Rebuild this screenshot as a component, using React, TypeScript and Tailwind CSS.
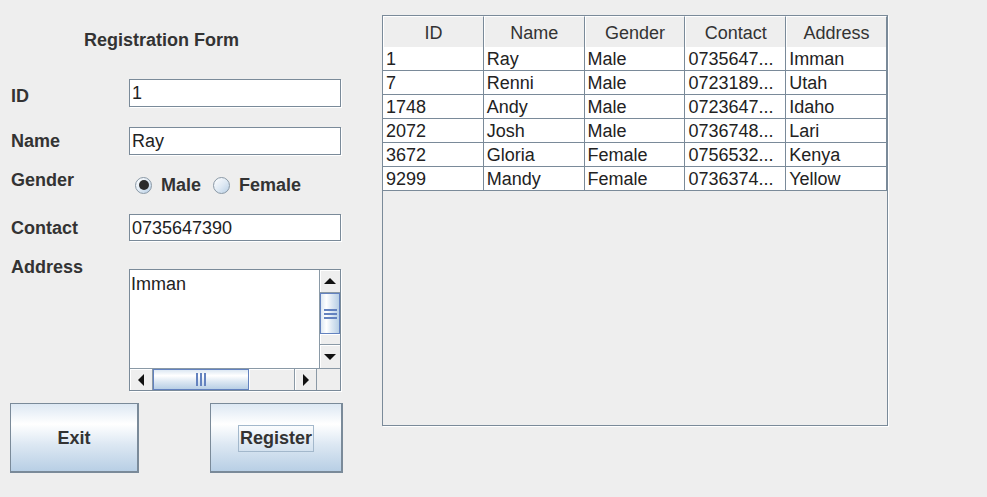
import React from "react";

const columns = ["ID", "Name", "Gender", "Contact", "Address"];

const rows = [
  ["1", "Ray", "Male", "0735647...", "Imman"],
  ["7", "Renni", "Male", "0723189...", "Utah"],
  ["1748", "Andy", "Male", "0723647...", "Idaho"],
  ["2072", "Josh", "Male", "0736748...", "Lari"],
  ["3672", "Gloria", "Female", "0756532...", "Kenya"],
  ["9299", "Mandy", "Female", "0736374...", "Yellow"],
];

function Arrow({ dir }: { dir: "up" | "down" | "left" | "right" }) {
  const points = {
    up: "0,6 12,6 6,0",
    down: "0,0 12,0 6,6",
    left: "6,0 6,12 0,6",
    right: "0,0 0,12 6,6",
  }[dir];
  const vertical = dir === "up" || dir === "down";
  return (
    <svg width={vertical ? 12 : 6} height={vertical ? 6 : 12} viewBox={vertical ? "0 0 12 6" : "0 0 6 12"}>
      <polygon points={points} fill="#111" />
    </svg>
  );
}

function ScrollButton({ dir, className }: { dir: "up" | "down" | "left" | "right"; className: string }) {
  return (
    <div
      className={`flex items-center justify-center bg-[#eeeeee] shadow-[inset_1px_1px_0_#ffffff] border-[#8a99a6] ${className}`}
    >
      <Arrow dir={dir} />
    </div>
  );
}

function TextField({ value, height }: { value: string; height: "h-[28px]" | "h-[27px]" }) {
  return (
    <div
      className={`w-[212px] ${height} bg-white border border-[#7a8a99] shadow-[1px_1px_0_#ffffff] pl-[2px] text-[18px] leading-[26px] text-[#222]`}
    >
      {value}
    </div>
  );
}

function Radio({ checked, label }: { checked: boolean; label: string }) {
  return (
    <div className="flex items-center h-[24px]">
      <span className="w-[17px] h-[17px] rounded-full border border-[#8a99a6] bg-[linear-gradient(135deg,#ffffff_0%,#dde8f3_55%,#b8cfe5_100%)] flex items-center justify-center">
        {checked && <span className="w-[10px] h-[10px] rounded-full bg-[#2b2b2b]" />}
      </span>
      <span className="ml-[9px] font-bold text-[18px] leading-[24px] text-[#333]">{label}</span>
    </div>
  );
}

function AddressArea() {
  return (
    <div className="w-[212px] h-[122px] bg-white border border-[#7a8a99] shadow-[1px_1px_0_#ffffff] flex flex-col">
      <div className="flex h-[98px]">
        <div className="flex-1 pl-[1px] pt-[3px] text-[18px] leading-[22px] text-[#222]">Imman</div>
        <div className="w-[21px] flex flex-col border-l border-[#8a99a6] bg-[#eeeeee]">
          <ScrollButton dir="up" className="h-[23px] border-b" />
          <div className="h-[41px] border border-[#6382bf] bg-[linear-gradient(to_right,#dde8f3_0%,#ffffff_30%,#dde8f3_60%,#b8cfe5_100%)] flex flex-col items-center justify-center gap-[2px]">
            <span className="w-[13px] h-[2px] bg-[#6382bf]" />
            <span className="w-[13px] h-[2px] bg-[#6382bf]" />
            <span className="w-[13px] h-[2px] bg-[#6382bf]" />
          </div>
          <div className="h-[11px] border-b border-[#8a99a6] shadow-[inset_1px_1px_0_#ffffff]" />
          <ScrollButton dir="down" className="flex-1" />
        </div>
      </div>
      <div className="flex h-[22px] border-t border-[#8a99a6] bg-[#eeeeee]">
        <ScrollButton dir="left" className="w-[23px] border-r" />
        <div className="w-[96px] border border-[#6382bf] bg-[linear-gradient(to_bottom,#dde8f3_0%,#ffffff_30%,#dde8f3_60%,#b8cfe5_100%)] flex items-center justify-center gap-[2px]">
          <span className="w-[2px] h-[13px] bg-[#6382bf]" />
          <span className="w-[2px] h-[13px] bg-[#6382bf]" />
          <span className="w-[2px] h-[13px] bg-[#6382bf]" />
        </div>
        <div className="w-[46px] border-r border-[#8a99a6] shadow-[inset_1px_1px_0_#ffffff]" />
        <ScrollButton dir="right" className="w-[22px] border-r" />
        <div className="flex-1 bg-[#eeeeee]" />
      </div>
    </div>
  );
}

export default function App() {
  return (
    <div className="w-[987px] h-[497px] bg-[#eeeeee] flex font-['Liberation_Sans',Arial,sans-serif] text-[#222] overflow-hidden">
      {/* form */}
      <div className="w-[382px] flex flex-col pt-[28px]">
        <div className="pl-[84px] font-bold text-[18px] leading-[24px] text-[#333]">Registration Form</div>

        <div className="flex mt-[27px] h-[28px]">
          <div className="w-[129px] pl-[11px] pt-[3px] font-bold text-[18px] leading-[28px] text-[#333]">ID</div>
          <TextField value="1" height="h-[28px]" />
        </div>

        <div className="flex mt-[20px] h-[28px]">
          <div className="w-[129px] pl-[11px] font-bold text-[18px] leading-[28px] text-[#333]">Name</div>
          <TextField value="Ray" height="h-[28px]" />
        </div>

        <div className="flex items-start h-[24px] mt-[13px]">
          <div className="w-[129px] pl-[11px] font-bold text-[18px] leading-[24px] text-[#333]">Gender</div>
          <div className="flex items-start h-[24px] gap-[12px] pl-[6px] mt-[5px]">
            <Radio checked label="Male" />
            <Radio checked={false} label="Female" />
          </div>
        </div>

        <div className="flex mt-[22px] h-[27px]">
          <div className="w-[129px] pl-[11px] pt-[1px] font-bold text-[18px] leading-[27px] text-[#333]">Contact</div>
          <TextField value="0735647390" height="h-[27px]" />
        </div>

        <div className="flex mt-[15px]">
          <div className="w-[129px] pl-[11px] font-bold text-[18px] leading-[22px] text-[#333]">Address</div>
          <div className="mt-[13px]">
            <AddressArea />
          </div>
        </div>

        <div className="flex mt-[12px] pl-[10px] gap-[71px]">
          <button className="w-[129px] h-[70px] border border-[#7a8a99] border-r-2 border-b-2 pt-[2px] bg-[linear-gradient(to_bottom,#dde8f3_0%,#ffffff_30%,#dde8f3_60%,#b8cfe5_100%)] font-bold text-[18px] text-[#333]">
            Exit
          </button>
          <button className="w-[133px] h-[70px] border border-[#7a8a99] border-r-2 border-b-2 pt-[2px] bg-[linear-gradient(to_bottom,#dde8f3_0%,#ffffff_30%,#dde8f3_60%,#b8cfe5_100%)] flex items-center justify-center">
            <span className="h-[27px] px-[1px] border border-[#a3b8cc] font-bold text-[18px] leading-[25px] text-[#333]">
              Register
            </span>
          </button>
        </div>
      </div>

      {/* table */}
      <div className="pt-[15px]">
        <div className="w-[506px] h-[411px] border border-[#7a8a99] shadow-[1px_1px_0_#ffffff] bg-[#eeeeee]">
          <div className="grid grid-cols-5 h-[31px] border-b border-[#7a8a99]">
            {columns.map((c) => (
              <div
                key={c}
                className="border-r border-[#7a8a99] border-l border-l-white border-t border-t-white bg-[#eeeeee] text-center text-[18px] pt-[2px] leading-[28px] text-[#333]"
              >
                {c}
              </div>
            ))}
          </div>
          {rows.map((r) => (
            <div key={r[0]} className="grid grid-cols-5 h-[24px] bg-white border-b border-[#7a8a99]">
              {r.map((cell, i) => (
                <div
                  key={i}
                  className="border-r border-[#7a8a99] pl-[3px] pt-[1px] text-[18px] leading-[23px] text-[#222] whitespace-nowrap overflow-hidden"
                >
                  {cell}
                </div>
              ))}
            </div>
          ))}
        </div>
      </div>
    </div>
  );
}
